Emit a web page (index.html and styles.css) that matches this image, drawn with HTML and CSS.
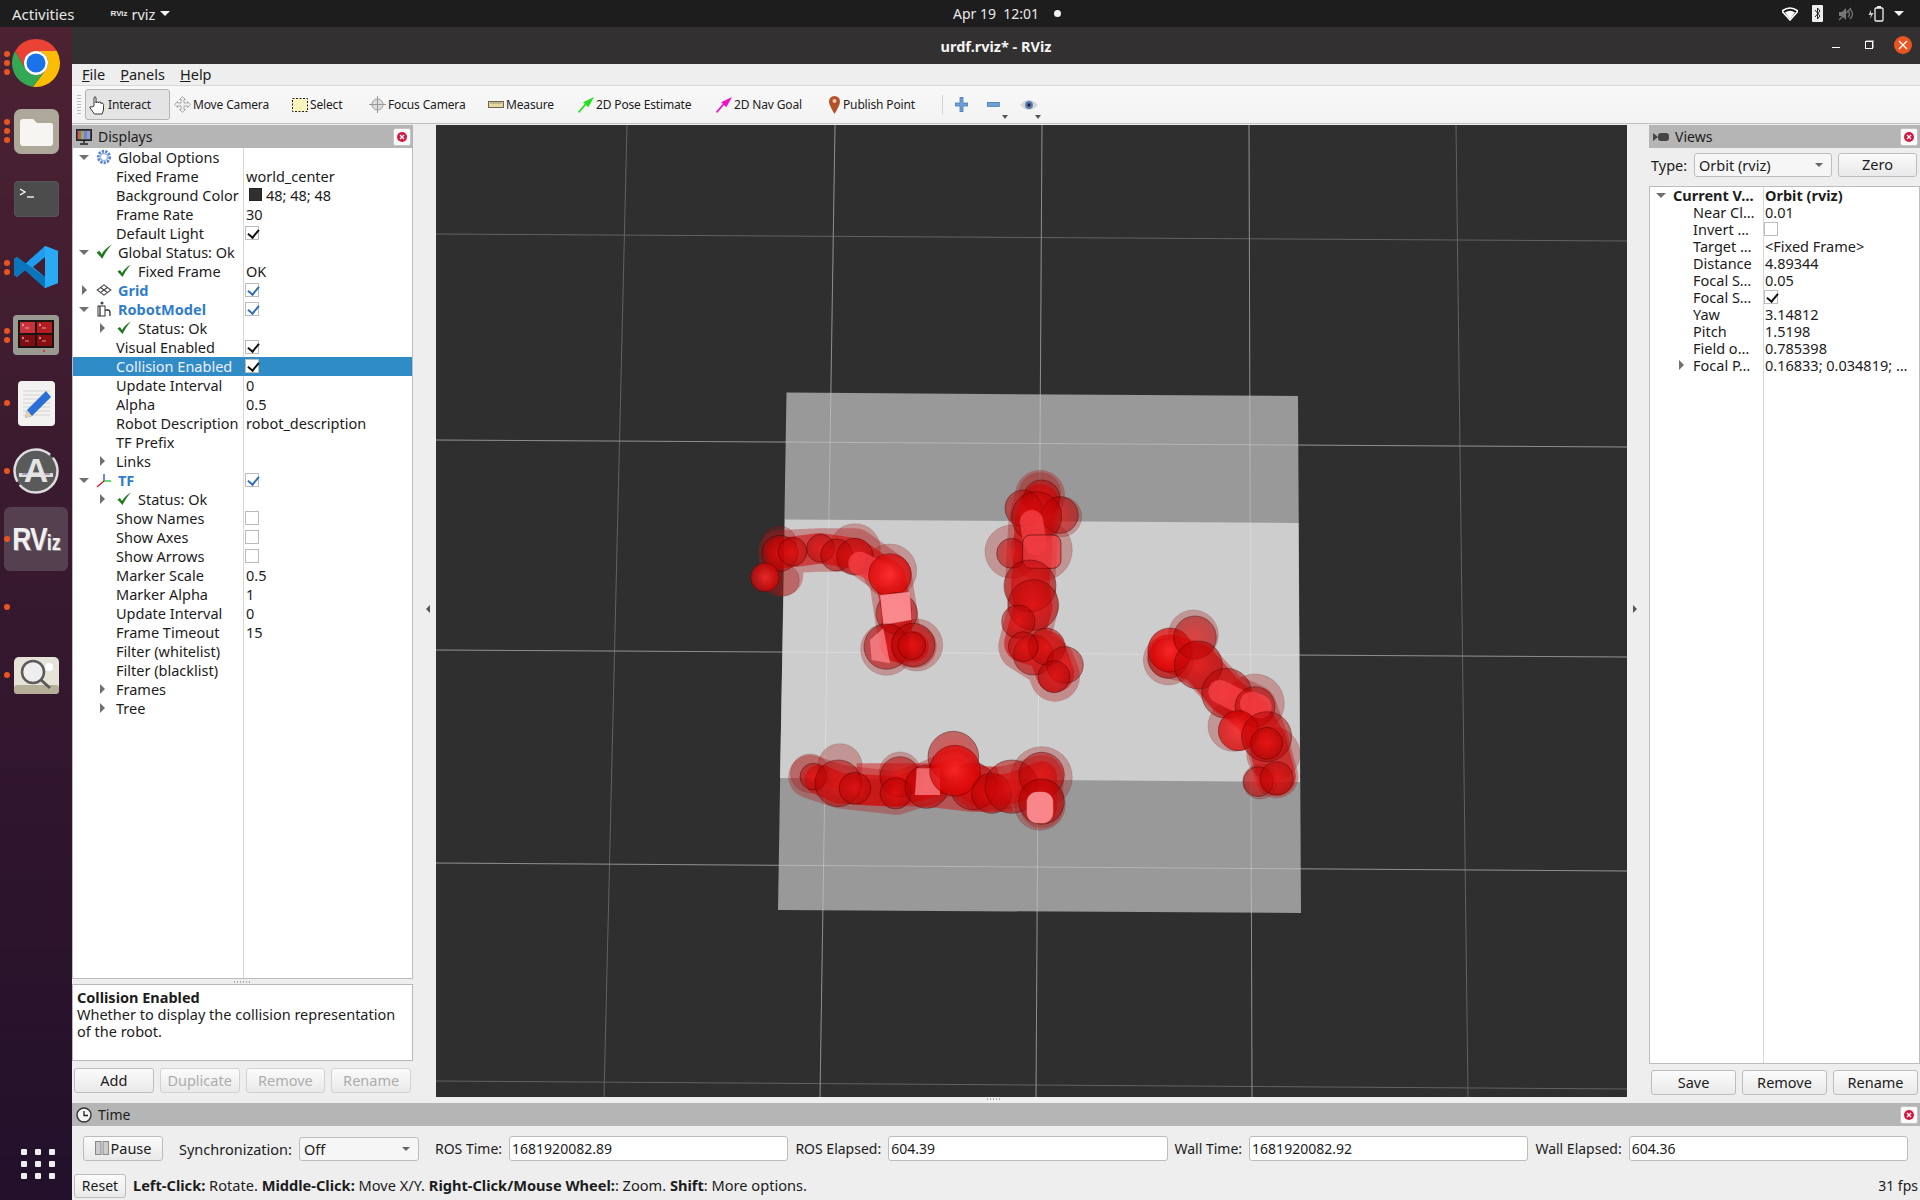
FILE: index.html
```html
<!DOCTYPE html>
<html lang="en">
<head>
    <meta charset="UTF-8">
    <title>urdf.rviz* - RViz</title>
    <link rel="stylesheet" href="styles.css">
</head>
<body>
    <svg class="defs" width="0" height="0">
        <symbol id="ok" viewBox="0 0 14 14"><path d="M0.500 7.500 3 6 5 9C7 5.500 10 2.500 14 0.500 10.500 4 8 8 5.500 13Z" fill="#1d7a1d"/></symbol>
        <symbol id="closeBtn" viewBox="0 0 18 18"><rect x=".5" y=".5" width="17" height="17" rx="2" fill="#fafafa" stroke="#c4c4c4"/><circle cx="9" cy="9" r="5" fill="#d3163f"/><path d="M7 7l4 4M11 7l-4 4" stroke="#fff" stroke-width="1.300"/></symbol>
        <radialGradient id="sphere" cx=".5" cy=".5" r=".5">
            <stop offset="0" stop-color="#f01010" stop-opacity=".62"/>
            <stop offset="1" stop-color="#b00000" stop-opacity=".5"/>
        </radialGradient>
        <radialGradient id="sphereBright" cx=".5" cy=".5" r=".5">
            <stop offset="0" stop-color="#ff2a2a" stop-opacity=".85"/>
            <stop offset="1" stop-color="#d80000" stop-opacity=".7"/>
        </radialGradient>
    </svg>

    <!-- gnome top bar -->
    <div class="topbar">
        <span class="activities">Activities</span>
        <span class="app-menu"><span class="mini-logo">RViz</span>rviz<i class="tri-white"></i></span>
        <span class="clock">Apr 19&nbsp;&nbsp;12:01<i class="clock-dot"></i></span>
        <span class="tray">
            <svg width="16" height="14" viewBox="0 0 16 14"><path d="M0 4 Q8 -2 16 4 L8 13 Z" fill="none" stroke="#fff" stroke-width="1.600"/><path d="M3 5.500 Q8 2 13 5.500 L8 12 Z" fill="#fff"/></svg>
            <svg width="12" height="17" viewBox="0 0 12 17"><rect width="11" height="17" rx="1" fill="#eee"/><path d="M3 5l5 6-2.500 3V3L8 6 3 12" fill="none" stroke="#222" stroke-width="1"/></svg>
            <svg width="16" height="14" viewBox="0 0 16 14"><path d="M1 5h3l4-4v12l-4-4H1Z" fill="#777"/><path d="M10 4q3 3 0 6M12 2q5 5 0 10" fill="none" stroke="#777" stroke-width="1.200"/><path d="M1 13 13 1" stroke="#777" stroke-width="1.200"/></svg>
            <svg width="16" height="16" viewBox="0 0 16 16"><rect x="7" y="2" width="8" height="13" rx="1" fill="none" stroke="#eee" stroke-width="1.300"/><rect x="9" y="0" width="4" height="2" fill="#eee"/><path d="M3 4 0.500 9H3L2 13 5.500 7H3Z" fill="#ccc"/></svg>
            <i class="tri-white tray-tri"></i>
        </span>
    </div>

    <div class="desktop">
        <!-- ubuntu dock -->
        <nav class="dock">
            <div class="dock-item"><span class="dots"><i></i><i></i><i></i></span>
                <svg width="48" height="48" viewBox="0 0 48 48"><path d="M44.800 12A24 24 0 0 1 21 47.800L34.400 30A12 12 0 0 0 24 12Z" fill="#fbbc04"/><path d="M3.200 12A24 24 0 0 0 21 47.800L34.400 30A12 12 0 0 1 13.600 30Z" fill="#34a853"/><path d="M24 0A24 24 0 0 1 44.800 12H24A12 12 0 0 0 13.600 30L3.200 12A24 24 0 0 1 24 0Z" fill="#ea4335"/><circle cx="24" cy="24" r="12" fill="#fff"/><circle cx="24" cy="24" r="9.500" fill="#1a73e8"/></svg>
            </div>
            <div class="dock-item"><span class="dots"><i></i><i></i><i></i></span>
                <svg width="45" height="45" viewBox="0 0 45 45"><rect width="45" height="45" rx="7" fill="#aea89a"/><path d="M6 13q0-3 3-3h10l4 4h14q2 0 2 3v17q0 3-3 3H9q-3 0-3-3Z" fill="#f6f5f1"/></svg>
            </div>
            <div class="dock-item">
                <svg width="45" height="36" viewBox="0 0 45 36"><rect width="45" height="36" rx="5" fill="#4c4c4c" stroke="#5e5e5e"/><path d="M6 8l5 3-5 3" fill="none" stroke="#fff" stroke-width="1.300"/><path d="M13 16h7" stroke="#fff" stroke-width="1.300"/></svg>
            </div>
            <div class="dock-item"><span class="dots"><i></i><i></i></span>
                <svg width="44" height="42" viewBox="0 0 44 42"><path d="M31 0 44 5V37L31 42 11 24 3 31 0 29V13L3 11 11 18ZM31 11 19 21 31 31Z" fill="#1f9cf0"/><path d="M31 0 44 5V37L31 42Z" fill="#2aa9f5"/><path d="M0 13 3 11 31 31V42L11 24 3 31 0 29Z" fill="#0b75bb"/></svg>
            </div>
            <div class="dock-item"><span class="dots"><i></i><i></i></span>
                <svg width="46" height="40" viewBox="0 0 46 40"><rect width="46" height="40" rx="4" fill="#9a9a92"/><rect x="5" y="5" width="36" height="28" fill="#1a1412"/><rect x="7" y="7" width="15" height="11" fill="#c8323a"/><rect x="24" y="7" width="15" height="11" fill="#b51c22"/><rect x="7" y="20" width="15" height="11" fill="#7d0d10"/><rect x="24" y="20" width="15" height="11" fill="#8a0d10"/><path d="M9 9l2 1-2 1M12 13h4M26 9l2 1-2 1M29 13h4M9 22l2 1-2 1M12 26h4M26 22l2 1-2 1M29 26h4" fill="none" stroke="#fff" stroke-width=".6"/><circle cx="31" cy="36" r="1" fill="#e22"/></svg>
            </div>
            <div class="dock-item"><span class="dots"><i></i></span>
                <svg width="37" height="45" viewBox="0 0 37 45"><rect width="37" height="45" rx="4" fill="#f2f2f0"/><path d="M5 10h27M5 14h27M5 18h27M5 22h27M5 26h27M5 30h27M5 34h27" stroke="#ccc" stroke-width=".8"/><path d="M28 10l5 6-19 19-7 2 2-8Z" fill="#2a6fd6"/><path d="M9 29l5 6-7 2Z" fill="#eed0a8"/></svg>
            </div>
            <div class="dock-item"><span class="dots"><i></i></span>
                <svg width="46" height="46" viewBox="0 0 46 46"><circle cx="23" cy="23" r="21.500" fill="#5a5a5a"/><circle cx="23" cy="23" r="21.500" fill="none" stroke="#ddd" stroke-width="2.500" stroke-dasharray="52 4 60 4"/><rect x="6" y="25" width="34" height="4" fill="#ddd"/><path d="M9 26h28" stroke="#7a4d86" stroke-width="1"/><text class="updater-a" x="23" y="34" text-anchor="middle">A</text></svg>
            </div>
            <div class="dock-item active"><span class="dots"><i></i></span>
                <span class="rviz-logo">R<span>V</span><small>iz</small></span>
            </div>
            <div class="dock-item"><span class="dots"><i></i></span></div>
            <div class="dock-item"><span class="dots"><i></i></span>
                <svg width="45" height="37" viewBox="0 0 45 37"><rect width="45" height="37" rx="5" fill="#e6e3d8"/><rect y="28" width="45" height="9" rx="3" fill="#b5ae98"/><circle cx="35" cy="10" r="4" fill="#fff"/><circle cx="19" cy="15" r="11" fill="#eee" stroke="#5a5a5a" stroke-width="2.500"/><path d="M27 23l9 8" stroke="#5a5a5a" stroke-width="3"/></svg>
            </div>
            <div class="app-grid">
                <i></i><i></i><i></i><i></i><i></i><i></i><i></i><i></i><i></i>
            </div>
        </nav>

        <div class="window">
            <div class="titlebar">
                <span class="title">urdf.rviz* - RViz</span>
                <span class="win-btns">
                    <i class="win-min"></i>
                    <i class="win-max"></i>
                    <span class="win-close">
                        <svg width="10" height="10" viewBox="0 0 10 10"><path d="M1 1l8 8M9 1l-8 8" stroke="#fff" stroke-width="1.300"/></svg>
                    </span>
                </span>
            </div>

            <div class="menubar">
                <span><u>F</u>ile</span>
                <span><u>P</u>anels</span>
                <span><u>H</u>elp</span>
            </div>

            <div class="toolbar">
                <span class="grip"></span>
                <span class="tool active">
                    <svg width="17" height="20" viewBox="0 0 17 20"><path d="M5 11V2.500q1-1.500 2 0V8q0-1.500 1.500-1t1 1q0-1.500 1.500-1t1 1.500q1-1 2 0t.5 2V15l-1.500 4H5.500L1 13q-.5-2 2-1Z" fill="#fff" stroke="#222" stroke-width=".9"/></svg>
                    Interact
                </span>
                <span class="tool">
                    <svg width="17" height="17" viewBox="0 0 17 17"><path d="M8.500 0.500l3 3H10V7h3.500V5.500l3 3-3 3V10H10v3.500h1.500l-3 3-3-3H7V10H3.500v1.500l-3-3 3-3V7H7V3.500H5.500Z" fill="#eee" stroke="#999" stroke-width=".8"/></svg>
                    Move Camera
                </span>
                <span class="tool">
                    <svg width="16" height="14" viewBox="0 0 16 14"><rect x=".5" y=".5" width="15" height="13" fill="#fbf5bd" stroke="#222" stroke-dasharray="2 1.500"/></svg>
                    Select
                </span>
                <span class="tool">
                    <svg width="17" height="17" viewBox="0 0 17 17"><circle cx="8.500" cy="8.500" r="5.500" fill="#ddd" stroke="#999"/><path d="M8.500 0v17M0 8.500h17" stroke="#999"/></svg>
                    Focus Camera
                </span>
                <span class="tool">
                    <svg width="16" height="7" viewBox="0 0 16 7"><rect x=".5" y=".5" width="15" height="6" fill="#e6d9a0" stroke="#665"/><path d="M3 1v2M5 1v2M7 1v2M9 1v2M11 1v2M13 1v2" stroke="#665" stroke-width=".6"/></svg>
                    Measure
                </span>
                <span class="tool">
                    <svg width="16" height="16" viewBox="0 0 14 14"><path d="M14 0 9 9 7 7 1 14 0 13 6 6 4.500 4.500Z" fill="#22e01f"/></svg>
                    2D Pose Estimate
                </span>
                <span class="tool">
                    <svg width="16" height="16" viewBox="0 0 14 14"><path d="M14 0 9 9 7 7 1 14 0 13 6 6 4.500 4.500Z" fill="#ee0fc8"/></svg>
                    2D Nav Goal
                </span>
                <span class="tool">
                    <svg width="13" height="18" viewBox="0 0 11 18"><path d="M5.500 18Q0 9 0 5.500a5.500 5.500 0 0 1 11 0Q11 9 5.500 18Z" fill="#b4502a"/><circle cx="5.500" cy="5" r="2" fill="#eec8a8"/></svg>
                    Publish Point
                </span>
                <span class="tool-sep"></span>
                <span class="tool icon-only">
                    <svg width="13" height="15" viewBox="0 0 13 15"><path d="M5 0h3v6h5v3H8v6H5V9H0V6h5Z" fill="#6f9fd6" stroke="#3a70ad" stroke-width=".7"/></svg>
                </span>
                <span class="tool icon-only">
                    <svg width="13" height="5" viewBox="0 0 13 5"><rect x=".4" y=".4" width="12" height="4" fill="#6f9fd6" stroke="#3a70ad" stroke-width=".7"/></svg>
                    <i class="tri-small"></i>
                </span>
                <span class="tool icon-only">
                    <svg width="18" height="14" viewBox="0 0 16 12"><path d="M0 6Q8 -3 16 6 8 15 0 6Z" fill="#d8d8d8"/><circle cx="8" cy="6" r="3.500" fill="#5a7db4"/><circle cx="8" cy="6" r="1.500" fill="#223"/></svg>
                    <i class="tri-small"></i>
                </span>
            </div>

            <div class="workspace">
                <!-- Displays panel -->
                <section class="displays">
                    <header class="dock-title">
                        <svg width="16" height="16" viewBox="0 0 16 16"><rect x=".5" y=".5" width="15" height="11" fill="#444" stroke="#222"/><rect x="2" y="2" width="3" height="8" fill="#d05a5a"/><rect x="5" y="2" width="3" height="8" fill="#7ab86a"/><rect x="8" y="2" width="3" height="8" fill="#8a78c8"/><rect x="11" y="2" width="3" height="8" fill="#8aa0d0"/><path d="M8 12v2M4 15h8" stroke="#222" stroke-width="1.500"/></svg>
                        <span>Displays</span>
                        <svg class="close"><use href="#closeBtn"/></svg>
                    </header>
                    <div class="tree">
                        <div class="row top">
                            <i class="arrow open"></i>
                            <svg class="ic" viewBox="0 0 14 14"><circle cx="7" cy="7" r="5" fill="none" stroke="#5b86c9" stroke-width="2.500" stroke-dasharray="2 1"/><circle cx="7" cy="7" r="3" fill="none" stroke="#8fb0e0"/></svg>
                            <span class="name">Global Options</span>
                        </div>
                        <div class="row child"><span class="name">Fixed Frame</span><span class="val">world_center</span></div>
                        <div class="row child"><span class="name">Background Color</span><span class="val"><i class="swatch"></i>48; 48; 48</span></div>
                        <div class="row child"><span class="name">Frame Rate</span><span class="val">30</span></div>
                        <div class="row child"><span class="name">Default Light</span><span class="val"><i class="cb on"></i></span></div>
                        <div class="row top">
                            <i class="arrow open"></i>
                            <svg class="ic"><use href="#ok"/></svg>
                            <span class="name">Global Status: Ok</span>
                        </div>
                        <div class="row nested nest-plain"><svg class="ic"><use href="#ok"/></svg><span class="name">Fixed Frame</span><span class="val">OK</span></div>
                        <div class="row top">
                            <i class="arrow closed"></i>
                            <svg class="ic" viewBox="0 0 14 14"><path d="M7 2.500 13 7 7 11.500 1 7ZM4 4.800 10 9.200M10 4.800 4 9.200" fill="none" stroke="#444" stroke-width=".9"/></svg>
                            <span class="name link">Grid</span>
                            <span class="val"><i class="cb on blue"></i></span>
                        </div>
                        <div class="row top">
                            <i class="arrow open"></i>
                            <svg class="ic" viewBox="0 0 16 16"><circle cx="6" cy="2" r="1.500" fill="#345"/><rect x="2" y="5" width="7" height="10" fill="none" stroke="#333"/><path d="M4 5v10M9 9h3q2 0 2 3v3" fill="none" stroke="#333" stroke-width="1.300"/></svg>
                            <span class="name link">RobotModel</span>
                            <span class="val"><i class="cb on blue"></i></span>
                        </div>
                        <div class="row nested"><i class="arrow closed"></i><svg class="ic"><use href="#ok"/></svg><span class="name">Status: Ok</span></div>
                        <div class="row child"><span class="name">Visual Enabled</span><span class="val"><i class="cb on"></i></span></div>
                        <div class="row child selected"><span class="name">Collision Enabled</span><span class="val"><i class="cb on"></i></span></div>
                        <div class="row child"><span class="name">Update Interval</span><span class="val">0</span></div>
                        <div class="row child"><span class="name">Alpha</span><span class="val">0.5</span></div>
                        <div class="row child"><span class="name">Robot Description</span><span class="val">robot_description</span></div>
                        <div class="row child"><span class="name">TF Prefix</span></div>
                        <div class="row nested"><i class="arrow closed"></i><span class="name plain">Links</span></div>
                        <div class="row top">
                            <i class="arrow open"></i>
                            <svg class="ic" viewBox="0 0 16 16"><path d="M8 9V2" stroke="#2233cc" stroke-width="1.200"/><path d="M8 9h7" stroke="#11bb22" stroke-width="1.200"/><path d="M8 9 1 15" stroke="#dd1122" stroke-width="1.200"/></svg>
                            <span class="name link">TF</span>
                            <span class="val"><i class="cb on blue"></i></span>
                        </div>
                        <div class="row nested"><i class="arrow closed"></i><svg class="ic"><use href="#ok"/></svg><span class="name">Status: Ok</span></div>
                        <div class="row child"><span class="name">Show Names</span><span class="val"><i class="cb"></i></span></div>
                        <div class="row child"><span class="name">Show Axes</span><span class="val"><i class="cb"></i></span></div>
                        <div class="row child"><span class="name">Show Arrows</span><span class="val"><i class="cb"></i></span></div>
                        <div class="row child"><span class="name">Marker Scale</span><span class="val">0.5</span></div>
                        <div class="row child"><span class="name">Marker Alpha</span><span class="val">1</span></div>
                        <div class="row child"><span class="name">Update Interval</span><span class="val">0</span></div>
                        <div class="row child"><span class="name">Frame Timeout</span><span class="val">15</span></div>
                        <div class="row child"><span class="name">Filter (whitelist)</span></div>
                        <div class="row child"><span class="name">Filter (blacklist)</span></div>
                        <div class="row nested"><i class="arrow closed"></i><span class="name plain">Frames</span></div>
                        <div class="row nested"><i class="arrow closed"></i><span class="name plain">Tree</span></div>
                    </div>
                    <div class="splitter-dots"></div>
                    <div class="description">
                        <b>Collision Enabled</b><br>
                        Whether to display the collision representation of the robot.
                    </div>
                    <div class="btn-row">
                        <button>Add</button>
                        <button disabled>Duplicate</button>
                        <button disabled>Remove</button>
                        <button disabled>Rename</button>
                    </div>
                </section>

                <div class="side-handle"><i class="tri-left"></i></div>

                <!-- 3D view -->
                <div class="viewport">
                    <svg class="scene" width="1191" height="972" viewBox="436 125 1191 972">
                        <path class="grid" d="M627 125 604 1097M835 125 820 1097M1042 125 1036 1097M1249 125 1252 1097M1456 125 1468 1097M436 234 1627 241M436 440 1627 447M436 650 1627 657M436 863 1627 871M436 1081 1627 1089"/>
                        <polygon class="plane-dark" points="786.500,392.600 1298,396 1301,913 778,910"/>
                        <polygon class="plane-light" points="785,519.500 1298.500,523 1300,782 780,778"/>
                        <path class="grid-over" d="M835 125 820 1097M1042 125 1036 1097M1249 125 1252 1097M436 440 1627 447M436 650 1627 657M436 863 1627 871"/>

                        <g transform="translate(740 500) scale(.3333)">
                            <!-- upper left arm -->
                            <polyline class="halo-path" points="125,225 120,155 242,150 345,150 450,225 480,420 525,440"/>
                            <circle class="halo" cx="118" cy="130" r="52"/>
                            <circle class="halo" cx="130" cy="240" r="48"/>
                            <circle class="halo" cx="345" cy="147" r="76"/>
                            <circle class="halo" cx="450" cy="212" r="80"/>
                            <circle class="halo" cx="440" cy="448" r="78"/>
                            <circle class="halo" cx="530" cy="435" r="78"/>
                            <polyline class="body-path" points="125,160 242,145 345,160 450,230 470,330 470,440 520,440"/>
                            <circle class="core" cx="120" cy="160" r="54"/>
                            <circle class="core" cx="158" cy="155" r="43"/>
                            <circle class="core" cx="242" cy="145" r="42"/>
                            <circle class="core" cx="290" cy="165" r="48"/>
                            <circle class="core" cx="345" cy="170" r="55"/>
                            <circle class="bright" cx="75" cy="232" r="43"/>
                            <line class="capsule" x1="360" y1="190" x2="430" y2="225"/>
                            <circle class="bright" cx="450" cy="225" r="64"/>
                            <circle class="core" cx="470" cy="340" r="62"/>
                            <polygon class="pink" points="420,285 510,275 515,360 430,375"/>
                            <circle class="core" cx="440" cy="440" r="68"/>
                            <polygon class="pink-soft" points="390,420 430,385 450,490 395,480"/>
                            <circle class="core" cx="520" cy="435" r="65"/>
                            <circle class="core" cx="515" cy="437" r="42"/>

                            <!-- upper middle arm -->
                            <polyline class="halo-path wide" points="900,-15 880,70 870,260 880,320 850,440 930,490 945,530"/>
                            <circle class="halo" cx="900" cy="-20" r="62"/>
                            <circle class="halo" cx="965" cy="50" r="60"/>
                            <circle class="halo" cx="815" cy="155" r="80"/>
                            <circle class="halo" cx="905" cy="150" r="92"/>
                            <polyline class="body-path wide" points="900,10 880,70 880,150 870,260 880,320 850,430 920,450 945,520"/>
                            <circle class="core" cx="905" cy="-5" r="55"/>
                            <circle class="core" cx="960" cy="45" r="55"/>
                            <circle class="core" cx="850" cy="25" r="55"/>
                            <circle class="core" cx="890" cy="50" r="75"/>
                            <line class="capsule" x1="875" y1="65" x2="885" y2="130"/>
                            <circle class="core" cx="815" cy="160" r="45"/>
                            <rect class="capsule-box" x="848" y="105" width="115" height="100" rx="24"/>
                            <circle class="core" cx="870" cy="258" r="78"/>
                            <circle class="core" cx="880" cy="315" r="76"/>
                            <circle class="core" cx="835" cy="365" r="50"/>
                            <circle class="core" cx="880" cy="465" r="60"/>
                            <circle class="core" cx="920" cy="440" r="55"/>
                            <circle class="core" cx="850" cy="440" r="45"/>
                            <circle class="core" cx="975" cy="495" r="55"/>
                            <circle class="core" cx="942" cy="530" r="48"/>

                            <!-- lower arm -->
                            <polyline class="halo-path" points="210,830 300,860 470,880 560,850 645,812 720,870 815,860 905,830 905,920"/>
                            <circle class="halo" cx="210" cy="820" r="58"/>
                            <circle class="halo" cx="300" cy="797" r="66"/>
                            <circle class="halo" cx="480" cy="818" r="62"/>
                            <circle class="halo" cx="905" cy="832" r="92"/>
                            <circle class="halo" cx="900" cy="915" r="76"/>
                            <polygon class="limb-fill" points="350,790 600,790 770,800 820,935 690,935 560,920 350,915"/>
                            <polyline class="body-path" points="240,840 300,865 470,875 560,850 645,820 720,875 815,865 905,830 905,920"/>
                            <circle class="core" cx="220" cy="830" r="40"/>
                            <circle class="core" cx="295" cy="850" r="70"/>
                            <circle class="core" cx="345" cy="865" r="48"/>
                            <circle class="core" cx="480" cy="830" r="60"/>
                            <circle class="core" cx="467" cy="880" r="47"/>
                            <circle class="core" cx="560" cy="860" r="65"/>
                            <polygon class="pink-soft" points="530,805 600,805 600,885 525,885"/>
                            <circle class="core" cx="640" cy="770" r="76"/>
                            <circle class="core" cx="700" cy="860" r="70"/>
                            <circle class="bright" cx="645" cy="812" r="76"/>
                            <circle class="core" cx="755" cy="880" r="60"/>
                            <circle class="core" cx="815" cy="860" r="80"/>
                            <circle class="core" cx="905" cy="825" r="68"/>
                            <circle class="core" cx="905" cy="905" r="68"/>
                            <rect class="pink" x="860" y="875" width="80" height="95" rx="32"/>
                        </g>

                        <g transform="translate(1120 600) scale(.3333)">
                            <!-- right arm -->
                            <polyline class="halo-path" points="145,170 235,190 320,280 405,320 440,420 470,530"/>
                            <circle class="halo" cx="145" cy="180" r="75"/>
                            <circle class="halo" cx="220" cy="105" r="75"/>
                            <circle class="halo" cx="405" cy="310" r="88"/>
                            <circle class="halo" cx="340" cy="378" r="76"/>
                            <circle class="halo" cx="460" cy="462" r="80"/>
                            <circle class="halo" cx="420" cy="545" r="52"/>
                            <polyline class="body-path wide" points="150,160 235,190 320,285 390,340 440,420 470,530"/>
                            <circle class="core" cx="145" cy="175" r="60"/>
                            <circle class="bright" cx="150" cy="150" r="66"/>
                            <circle class="core" cx="225" cy="112" r="64"/>
                            <circle class="core" cx="235" cy="195" r="72"/>
                            <circle class="core" cx="320" cy="280" r="75"/>
                            <line class="capsule" x1="300" y1="275" x2="350" y2="300"/>
                            <circle class="core" cx="405" cy="320" r="60"/>
                            <line class="capsule" x1="395" y1="310" x2="420" y2="320"/>
                            <circle class="bright" cx="355" cy="392" r="60"/>
                            <circle class="core" cx="440" cy="410" r="75"/>
                            <circle class="core" cx="440" cy="430" r="48"/>
                            <circle class="core" cx="415" cy="545" r="45"/>
                            <circle class="core" cx="470" cy="535" r="50"/>
                        </g>
                    </svg>
                </div>

                <div class="side-handle right"><i class="tri-right"></i></div>

                <!-- Views panel -->
                <section class="views">
                    <header class="dock-title">
                        <svg width="16" height="10" viewBox="0 0 16 10"><path d="M0 1 5 5 0 9Z" fill="#444"/><rect x="5" y="1" width="11" height="8" rx="3" fill="#444"/></svg>
                        <span>Views</span>
                        <svg class="close"><use href="#closeBtn"/></svg>
                    </header>
                    <div class="type-row">
                        <label>Type:</label>
                        <span class="combo type-combo">Orbit (rviz)<i class="tri-gray"></i></span>
                        <button class="zero">Zero</button>
                    </div>
                    <div class="views-tree">
                        <div class="vrow head"><i class="arrow open"></i><span class="vname"><b>Current V…</b></span><span class="vval"><b>Orbit (rviz)</b></span></div>
                        <div class="vrow"><span class="vname">Near Cl…</span><span class="vval">0.01</span></div>
                        <div class="vrow"><span class="vname">Invert …</span><span class="vval"><i class="cb"></i></span></div>
                        <div class="vrow"><span class="vname">Target …</span><span class="vval">&lt;Fixed Frame&gt;</span></div>
                        <div class="vrow"><span class="vname">Distance</span><span class="vval">4.89344</span></div>
                        <div class="vrow"><span class="vname">Focal S…</span><span class="vval">0.05</span></div>
                        <div class="vrow"><span class="vname">Focal S…</span><span class="vval"><i class="cb on"></i></span></div>
                        <div class="vrow"><span class="vname">Yaw</span><span class="vval">3.14812</span></div>
                        <div class="vrow"><span class="vname">Pitch</span><span class="vval">1.5198</span></div>
                        <div class="vrow"><span class="vname">Field o…</span><span class="vval">0.785398</span></div>
                        <div class="vrow sub"><i class="arrow closed"></i><span class="vname">Focal P…</span><span class="vval">0.16833; 0.034819; …</span></div>
                    </div>
                    <div class="btn-row views-btns">
                        <button>Save</button>
                        <button>Remove</button>
                        <button>Rename</button>
                    </div>
                </section>
            </div>

            <!-- Time panel -->
            <section class="time-panel">
                <header class="dock-title">
                    <svg width="16" height="16" viewBox="0 0 16 16"><circle cx="8" cy="8" r="7" fill="#f4f4f4" stroke="#333" stroke-width="1.400"/><path d="M8 4v4.500h4" fill="none" stroke="#222" stroke-width="1.300"/></svg>
                    <span>Time</span>
                    <svg class="close"><use href="#closeBtn"/></svg>
                </header>
                <div class="time-row">
                    <button class="pause">
                        <svg width="14" height="14" viewBox="0 0 14 14"><rect x=".5" y=".5" width="5.500" height="13" fill="#ccc" stroke="#888"/><rect x="8" y=".5" width="5.500" height="13" fill="#ccc" stroke="#888"/></svg>
                        Pause
                    </button>
                    <label class="sync-label">Synchronization:</label>
                    <span class="combo sync-combo">Off<i class="tri-gray"></i></span>
                    <label class="ros-label">ROS Time:</label>
                    <input type="text" value="1681920082.89">
                    <label>ROS Elapsed:</label>
                    <input type="text" value="604.39">
                    <label>Wall Time:</label>
                    <input type="text" value="1681920082.92">
                    <label>Wall Elapsed:</label>
                    <input type="text" value="604.36">
                </div>
                <div class="status-row">
                    <button class="reset">Reset</button>
                    <span class="help"><b>Left-Click:</b> Rotate. <b>Middle-Click:</b> Move X/Y. <b>Right-Click/Mouse Wheel:</b>: Zoom. <b>Shift</b>: More options.</span>
                    <span class="fps">31 fps</span>
                </div>
            </section>
        </div>
    </div>
</body>
</html>
```

FILE: styles.css
```css
/* page */
* {
    box-sizing: border-box;
}

body {
    margin: 0;
    width: 1920px;
    height: 1200px;
    overflow: hidden;
    display: flex;
    flex-direction: column;
    font-family: "Noto Sans", sans-serif;
    font-size: 14.5px;
    color: #1c1c1c;
    background: #eee;
}

.defs {
    position: absolute;
}

i {
    display: block;
}

/* top bar */
.topbar {
    height: 27px;
    background: #1d1d1d;
    color: #e8e8e8;
    display: flex;
    align-items: center;
    position: relative;
    padding-left: 12px;
    flex: none;
}

.activities {
    font-size: 15px;
}

.app-menu {
    display: flex;
    align-items: center;
    margin-left: 36px;
}

.mini-logo {
    font-family: "Liberation Sans", sans-serif;
    font-size: 8px;
    font-weight: bold;
    width: 21px;
}

.tri-white {
    width: 0;
    height: 0;
    border-left: 5px solid transparent;
    border-right: 5px solid transparent;
    border-top: 5px solid #f2f2f2;
    margin-left: 5px;
}

.tray-tri {
    margin-left: -4px;
}

.clock {
    position: absolute;
    left: 953px;
    display: flex;
    align-items: center;
    font-size: 14px;
}

.clock-dot {
    width: 7px;
    height: 7px;
    border-radius: 50%;
    background: #f2f2f2;
    margin-left: 15px;
}

.tray {
    margin-left: auto;
    display: flex;
    align-items: center;
    gap: 14px;
    padding-right: 16px;
}

/* dock */
.desktop {
    flex: 1;
    display: flex;
    min-height: 0;
}

.dock {
    width: 72px;
    flex: none;
    padding-top: 2px;
    display: flex;
    flex-direction: column;
    background: linear-gradient(180deg, #4c2232, #3a1a2f 40%, #22102a);
}

.dock-item {
    height: 68px;
    display: flex;
    align-items: center;
    justify-content: center;
    position: relative;
    flex: none;
}

.dock-item.active::before {
    content: "";
    position: absolute;
    left: 4px;
    right: 4px;
    top: 2px;
    bottom: 2px;
    border-radius: 6px;
    background: #54404f;
}

.dots {
    position: absolute;
    left: 4px;
    top: 0;
    bottom: 0;
    display: flex;
    flex-direction: column;
    justify-content: center;
    gap: 3px;
    z-index: 1;
}

.dots i {
    width: 6px;
    height: 6px;
    border-radius: 50%;
    background: #e95420;
}

.rviz-logo {
    position: relative;
    font-family: "Liberation Sans", sans-serif;
    font-weight: bold;
    font-size: 32px;
    color: #f0f0f0;
    letter-spacing: -1px;
    text-shadow: 1px 1px 0 #888;
    transform: scaleX(.82);
}

.rviz-logo small {
    font-size: 22px;
    letter-spacing: 0;
}

.updater-a {
    font-family: "Liberation Sans", sans-serif;
    font-weight: bold;
    font-size: 34px;
    fill: #e4e4e4;
}

.app-grid {
    margin-top: auto;
    margin-bottom: 21px;
    margin-left: 21px;
    display: grid;
    grid-template-columns: repeat(3, 6px);
    gap: 6px 8px;
}

.app-grid i {
    height: 6px;
    border-radius: 1px;
    background: #eee;
}

/* window frame */
.window {
    flex: 1;
    display: flex;
    flex-direction: column;
    min-width: 0;
}

.titlebar {
    height: 37px;
    flex: none;
    background: #323031;
    color: #f4f4f4;
    font-weight: bold;
    display: flex;
    align-items: center;
    justify-content: center;
    position: relative;
}

.win-btns {
    position: absolute;
    right: 8px;
    top: 9px;
    display: flex;
    align-items: center;
}

.win-min {
    width: 8px;
    height: 1px;
    background: #fff;
    margin-right: 25px;
    margin-top: 5px;
}

.win-max {
    width: 8px;
    height: 8px;
    border: 1px solid #fff;
    margin-right: 21px;
    box-shadow: 1px -1px 0 #888;
}

.win-close {
    width: 18px;
    height: 18px;
    border-radius: 50%;
    background: #e95420;
    display: flex;
    align-items: center;
    justify-content: center;
}

.menubar {
    height: 22px;
    flex: none;
    background: #eee;
    border-bottom: 1px solid #d9d9d9;
    display: flex;
    align-items: center;
    gap: 15px;
    padding: 0 0 2px 10px;
}

.toolbar {
    height: 38px;
    flex: none;
    background: linear-gradient(180deg, #f8f8f8, #f3f3f3);
    border-bottom: 1px solid #bfbfbf;
    display: grid;
    grid-template-columns: 13px 85px 118px 77px 119px 90px 138px 112px 118px 1px 32px 33px 33px;
    align-items: center;
    font-size: 12px;
    letter-spacing: -.15px;
}

.grip {
    height: 22px;
    width: 4px;
    margin-left: 5px;
    background: radial-gradient(circle, #bbb 40%, transparent 50%) 0 0 / 2px 3px;
}

.tool {
    display: flex;
    align-items: center;
    gap: 2px;
    height: 31px;
    padding-left: 4px;
    white-space: nowrap;
    position: relative;
}

.tool.active {
    background: #e4e4e4;
    border: 1px solid #b4b4b4;
    border-radius: 3px;
    padding-left: 3px;
}

.tool.icon-only {
    padding-left: 12px;
}

.tool-sep {
    height: 19px;
    background: #d4d4d4;
}

.tri-small {
    position: absolute;
    right: 0;
    bottom: 1px;
    width: 0;
    height: 0;
    border-left: 3px solid transparent;
    border-right: 3px solid transparent;
    border-top: 4px solid #555;
}

/* main area */
.workspace {
    flex: 1;
    display: flex;
    min-height: 0;
    padding-top: 1px;
}

.displays {
    width: 341px;
    flex: none;
    display: flex;
    flex-direction: column;
}

.dock-title {
    height: 23px;
    flex: none;
    background: #b5b5b5;
    display: flex;
    align-items: center;
    gap: 6px;
    padding-left: 4px;
    padding-right: 2px;
    font-size: 14px;
}

.close {
    width: 18px;
    height: 18px;
    margin-left: auto;
}

/* property tree */
.tree {
    height: 831px;
    flex: none;
    border: 1px solid #bdbdbd;
    border-top: none;
    background: linear-gradient(#d8d8d8, #d8d8d8) 170px 0 / 1px 100% no-repeat, #fff;
}

.row {
    height: 19px;
    display: flex;
    align-items: center;
    white-space: nowrap;
    position: relative;
    padding-bottom: 2px;
}

.row .val {
    position: absolute;
    left: 173px;
    display: flex;
    align-items: center;
}

.row.top {
    padding-left: 6px;
}

.row.child {
    padding-left: 43px;
}

.row.nested {
    padding-left: 24px;
}

.row.nest-plain {
    padding-left: 44px;
}

.row.selected {
    background: #308cc6;
    color: #eef;
}

.ic {
    width: 14px;
    height: 14px;
    flex: none;
}

.top .ic {
    margin-left: 7px;
    width: 16px;
    height: 16px;
}

.nested .ic {
    margin-left: 10px;
}

.nest-plain .ic {
    margin-left: 0;
}

.top .name {
    margin-left: 6px;
}

.nested .name {
    margin-left: 7px;
}

.nested .name.plain {
    margin-left: 9px;
}

.name.link {
    color: #2f7dcb;
    font-weight: bold;
}

.arrow {
    width: 10px;
    height: 10px;
    flex: none;
    position: relative;
}

.arrow::after {
    content: "";
    position: absolute;
    width: 0;
    height: 0;
}

.arrow.open::after {
    left: 0;
    top: 3px;
    border-left: 5px solid transparent;
    border-right: 5px solid transparent;
    border-top: 5px solid #707070;
}

.arrow.closed::after {
    left: 3px;
    top: 0;
    border-top: 5px solid transparent;
    border-bottom: 5px solid transparent;
    border-left: 5px solid #707070;
}

.swatch {
    width: 13px;
    height: 13px;
    background: #303030;
    border: 1px solid #222;
    margin: 0 4px 0 3px;
}

.cb {
    width: 14px;
    height: 14px;
    margin-left: -1px;
    background: #fff;
    border: 1px solid #bcbcbc;
    position: relative;
}

.cb.on::after {
    content: "";
    position: absolute;
    left: 3.500px;
    top: .5px;
    width: 5px;
    height: 9px;
    border-right: 2px solid #111;
    border-bottom: 2px solid #111;
    transform: rotate(40deg);
}

.cb.blue::after {
    border-color: #2f6fb5;
}

.splitter-dots {
    height: 5px;
    flex: none;
    background: radial-gradient(circle, #aaa 45%, transparent 55%) 161px 2px / 3px 2px repeat-x;
    clip-path: inset(0 162px 0 161px);
}

.description {
    height: 77px;
    flex: none;
    background: #fff;
    border: 1px solid #b8b8b8;
    padding: 4px;
    line-height: 17px;
}

.btn-row {
    display: flex;
    gap: 6px;
    padding: 7px 2px 0;
}

button {
    font: inherit;
    color: inherit;
    height: 25px;
    padding: 0 0 2px;
    background: linear-gradient(180deg, #fbfbfb, #e9e9e9);
    border: 1px solid #bdbdbd;
    border-radius: 3px;
}

.btn-row button {
    flex: 1;
}

button:disabled {
    color: #adadad;
    border-color: #d2d2d2;
}

/* viewport */
.side-handle {
    width: 23px;
    flex: none;
    display: flex;
    align-items: center;
    justify-content: center;
}

.side-handle.right {
    width: 22px;
}

.tri-left {
    width: 0;
    height: 0;
    border-top: 4px solid transparent;
    border-bottom: 4px solid transparent;
    border-right: 4px solid #555;
    margin-left: 6px;
    margin-top: -10px;
}

.tri-right {
    width: 0;
    height: 0;
    border-top: 4px solid transparent;
    border-bottom: 4px solid transparent;
    border-left: 4px solid #555;
    margin-right: 6px;
    margin-top: -10px;
}

.viewport {
    width: 1191px;
    height: 972px;
    flex: none;
    background: #2f2f2f;
}

.scene {
    display: block;
}

.grid {
    fill: none;
    stroke: #626262;
    stroke-width: 1;
}

.grid-over {
    fill: none;
    stroke: rgba(255, 255, 255, .28);
    stroke-width: 1;
}

.plane-dark {
    fill: #999;
}

.plane-light {
    fill: #cdcdcd;
}

/* robot spheres, drawn in the 3x coordinates they were measured in */
.halo-path {
    fill: none;
    stroke: rgba(175, 25, 25, .36);
    stroke-width: 130;
    stroke-linejoin: round;
    stroke-linecap: round;
}

.halo-path.wide {
    stroke-width: 150;
}

.body-path {
    fill: none;
    stroke: rgba(215, 0, 0, .55);
    stroke-width: 92;
    stroke-linejoin: round;
    stroke-linecap: round;
}

.body-path.wide {
    stroke-width: 115;
}

.limb-fill {
    fill: rgba(215, 0, 0, .45);
}

.halo {
    fill: rgba(170, 20, 20, .3);
    stroke: rgba(80, 20, 20, .25);
    stroke-width: 2;
}

.core {
    fill: url(#sphere);
    stroke: rgba(50, 0, 0, .38);
    stroke-width: 3;
}

.bright {
    fill: url(#sphereBright);
    stroke: rgba(60, 0, 0, .38);
    stroke-width: 3;
}

.pink {
    fill: rgba(255, 150, 155, .88);
    stroke: rgba(90, 30, 30, .25);
    stroke-width: 2;
}

.pink-soft {
    fill: rgba(255, 140, 145, .7);
}

.capsule {
    stroke: rgba(250, 70, 75, .7);
    stroke-width: 70;
    stroke-linecap: round;
}

.capsule-box {
    fill: rgba(240, 60, 65, .75);
    stroke: rgba(50, 0, 0, .55);
    stroke-width: 3;
}

/* views panel */
.views {
    flex: 1;
    min-width: 0;
    display: flex;
    flex-direction: column;
}

.type-row {
    display: flex;
    align-items: flex-start;
    height: 38px;
    padding: 5px 3px 0 2px;
    flex: none;
}

.type-row label {
    width: 43px;
    line-height: 24px;
}

.combo {
    display: flex;
    align-items: center;
    height: 24px;
    background: #f6f6f6;
    border: 1px solid #bdbdbd;
    border-radius: 3px;
    padding-left: 4px;
    position: relative;
}

.tri-gray {
    position: absolute;
    right: 8px;
    top: 9px;
    width: 0;
    height: 0;
    border-left: 4px solid transparent;
    border-right: 4px solid transparent;
    border-top: 4px solid #666;
}

.type-combo {
    width: 138px;
}

.zero {
    width: 79px;
    height: 24px;
    margin-left: 6px;
}

.views-tree {
    height: 878px;
    flex: none;
    background: linear-gradient(#d8d8d8, #d8d8d8) 113px 0 / 1px 100% no-repeat, #fff;
    border: 1px solid #bdbdbd;
}

.vrow {
    height: 17px;
    display: flex;
    align-items: center;
    white-space: nowrap;
    position: relative;
    padding: 0 0 2px 43px;
}

.vrow .vval {
    position: absolute;
    left: 115px;
    display: flex;
    align-items: center;
}

.vrow.head {
    padding-left: 6px;
}

.vrow.head .vname {
    margin-left: 7px;
}

.vrow.sub {
    padding-left: 26px;
}

.vrow.sub .vname {
    margin-left: 7px;
}

.views-btns {
    padding-top: 6px;
}

/* time panel */
.time-panel {
    height: 97px;
    flex: none;
    position: relative;
}

.time-panel::before {
    content: "";
    position: absolute;
    left: 914px;
    top: -5px;
    width: 15px;
    height: 2px;
    background: radial-gradient(circle, #aaa 45%, transparent 55%) 0 0 / 3px 2px repeat-x;
}

.time-row {
    height: 25px;
    margin-top: 10px;
    display: flex;
    align-items: center;
    gap: 7px;
    padding: 0 12px 0 11px;
}

.pause {
    width: 80px;
    flex: none;
    display: flex;
    align-items: center;
    justify-content: center;
    gap: 2px;
}

.sync-label {
    margin-left: 9px;
}

.sync-combo {
    width: 120px;
    flex: none;
}

.ros-label {
    margin-left: 9px;
}

.time-row label {
    flex: none;
}

.time-row label:not(.sync-label) {
    font-size: 14px;
}

.time-row input {
    flex: 1;
    min-width: 0;
    height: 25px;
    font: inherit;
    font-size: 14px;
    color: inherit;
    padding: 0 2px;
    border: 1px solid #bdbdbd;
    border-radius: 3px;
    background: #fff;
}

.status-row {
    display: flex;
    align-items: center;
    height: 24px;
    margin-top: 13px;
    padding: 0 2px;
    font-size: 14px;
}

.reset {
    width: 52px;
    height: 24px;
    flex: none;
}

.help {
    margin-left: 7px;
    margin-top: -2px;
    font-size: 14.6px;
}

.fps {
    margin-left: auto;
    margin-top: -2px;
}
```
